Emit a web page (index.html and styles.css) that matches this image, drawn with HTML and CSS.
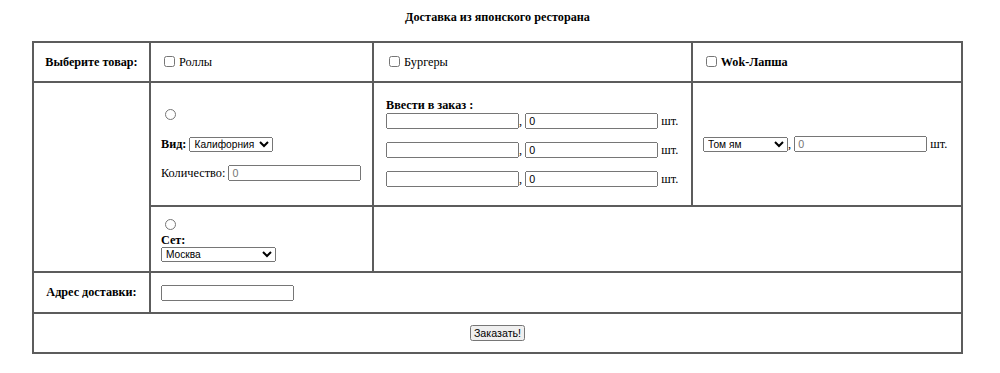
FILE: index.html
```html
<!DOCTYPE html>
<html lang="ru">
  <head>
    <meta charset="UTF-8" />
    <title>Доставка из японского ресторана</title>
    <link rel="stylesheet" href="styles.css">
  </head>
  <body>
    <main class="page">
      <h4 class="page-title">Доставка из японского ресторана</h4>
      <form class="order-form" onsubmit="return false">
        <table class="order-table">
          <colgroup>
            <col class="col-label">
            <col class="col-rolls">
            <col class="col-burgers">
            <col class="col-wok">
          </colgroup>
          <tr class="row-head">
            <th>Выберите товар:</th>
            <td><label><input type="checkbox" class="check"> Роллы</label></td>
            <td class="burgers"><label><input type="checkbox" class="check"> Бургеры</label></td>
            <td><label class="strong"><input type="checkbox" class="check"> Wok-Лапша</label></td>
          </tr>
          <tr class="row-items">
            <td rowspan="2"></td>
            <td class="rolls">
              <p><input type="radio" name="rolls" class="radio"></p>
              <p><b>Вид:</b> <select class="select select-rolls">
                <option>Калифорния</option>
                <option>Филадельфия</option>
              </select></p>
              <p>Количество: <input type="text" class="field" placeholder="0"></p>
            </td>
            <td class="burgers burgers-order">
              <p><b>Ввести в заказ :</b><br>
                <input type="text" class="field">, <input type="text" class="field" value="0"> шт.</p>
              <p><input type="text" class="field">, <input type="text" class="field" value="0"> шт.</p>
              <p><input type="text" class="field">, <input type="text" class="field" value="0"> шт.</p>
            </td>
            <td>
              <select class="select select-wok">
                <option>Том ям</option>
                <option>Удон</option>
              </select>, <input type="text" class="field" placeholder="0"> шт.
            </td>
          </tr>
          <tr class="row-set">
            <td class="set">
              <input type="radio" name="rolls" class="radio"><br>
              <b>Сет:</b><br>
              <select class="select select-set">
                <option>Москва</option>
                <option>Токио</option>
              </select>
            </td>
            <td colspan="2"></td>
          </tr>
          <tr class="row-address">
            <th>Адрес доставки:</th>
            <td colspan="3"><input type="text" class="field"></td>
          </tr>
          <tr class="row-submit">
            <td colspan="4"><button type="submit" class="submit">Заказать!</button></td>
          </tr>
        </table>
      </form>
    </main>
  </body>
</html>
```

FILE: styles.css
```css
body {
  margin: 0;
  font-family: "Liberation Serif", "Times New Roman", serif;
  font-size: 12.3px;
  color: #000;
  background-color: #fff;
}

b,
th,
.strong {
  font-weight: bold;
  font-size: 12.2px;
}

.page {
  width: 929px;
  margin: 10px 0 0 33px;
}

.page-title {
  margin: 0 0 16px;
  font-size: 12.2px;
  line-height: 15px;
  text-align: center;
}

.order-table {
  width: 931px;
  margin-left: -1px;
  table-layout: fixed;
  border-collapse: collapse;
}

.col-label { width: 117px; }
.col-rolls { width: 223px; }
.col-burgers { width: 319px; }
.col-wok { width: 270px; }

.order-table th,
.order-table td {
  border: 2px solid #5c5c5c;
  padding: 0 10px;
  vertical-align: middle;
  text-align: left;
  white-space: nowrap;
}

.order-table th {
  padding: 0;
  text-align: center;
}

.order-table p {
  margin: 13px 0;
}

.order-table .burgers {
  padding-left: 12px;
}

.order-table .burgers-order {
  padding-bottom: 4px;
}

.set {
  line-height: 14px;
}

.row-head { height: 40px; }
.row-items { height: 124px; }
.row-set { height: 66px; }
.row-address { height: 41px; }
.row-submit { height: 40px; }

.row-submit td {
  text-align: center;
}

.check {
  width: 11px;
  height: 11px;
  margin: 2px 1px 2px 3px;
  vertical-align: -1px;
}

.radio {
  width: 11px;
  height: 11px;
  margin: 2px 3px 0 4px;
}

.field,
.select,
.submit {
  font-family: "Liberation Sans", Arial, sans-serif;
  font-size: 10.7px;
  box-sizing: border-box;
}

.field {
  width: 133px;
  height: 16px;
  padding: 1px 2px;
}

.select {
  height: 15px;
  padding: 0;
  font-size: 10.2px;
}

.select-rolls { width: 84px; }
.select-wok { width: 85px; }
.select-set { width: 115px; }

.submit {
  width: 55px;
  height: 16px;
  padding: 0;
}
```
